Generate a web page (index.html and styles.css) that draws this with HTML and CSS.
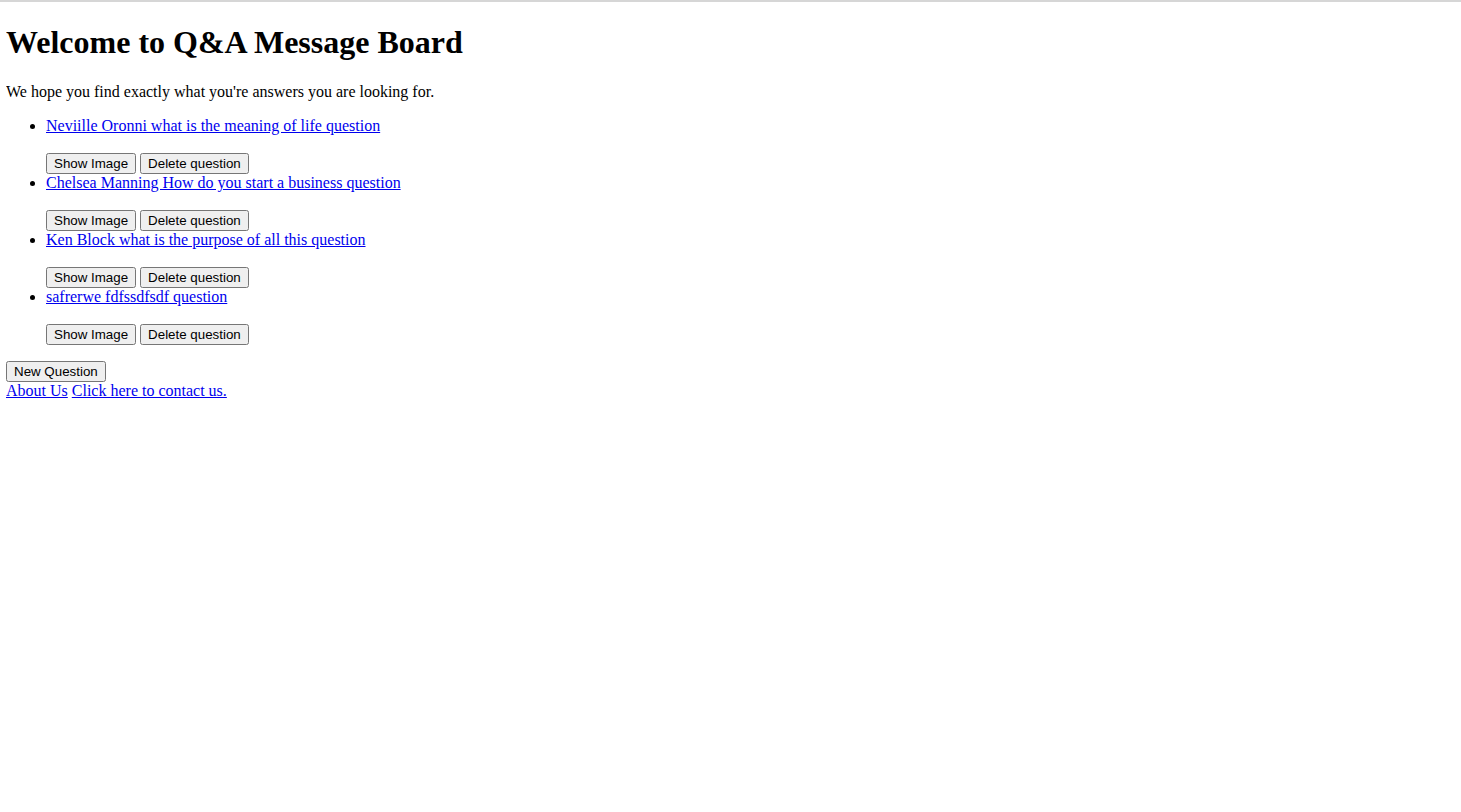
FILE: index.html
```html
<!DOCTYPE html>
<html>
<head>
<meta charset="utf-8">
<title>Q&amp;A Message Board</title>
<link rel="stylesheet" href="styles.css">
</head>
<body class="page">
<h1 class="title">Welcome to Q&amp;A Message Board</h1>
<p class="intro">We hope you find exactly what you're answers you are looking for.</p>
<ul class="questions">
  <li class="question"><a class="question-link" href="#">Neviille Oronni what is the meaning of life question</a><br><br><button class="btn">Show Image</button> <button class="btn">Delete question</button></li>
  <li class="question"><a class="question-link" href="#">Chelsea Manning How do you start a business question</a><br><br><button class="btn">Show Image</button> <button class="btn">Delete question</button></li>
  <li class="question"><a class="question-link" href="#">Ken Block what is the purpose of all this question</a><br><br><button class="btn">Show Image</button> <button class="btn">Delete question</button></li>
  <li class="question"><a class="question-link" href="#">safrerwe fdfssdfsdf question</a><br><br><button class="btn">Show Image</button> <button class="btn">Delete question</button></li>
</ul>
<button class="btn">New Question</button><br>
<a class="footer-link" href="#">About Us</a> <a class="footer-link" href="#">Click here to contact us.</a>
</body>
</html>
```
FILE: styles.css
```css
html {
  font-family: "Liberation Serif", "Times New Roman", serif;
  border-top: 2px solid #d6d6d6;
}
.page {
  margin: 0 6px 8px 6px;
}
.title {
  font-size: 2em;
  margin: calc(0.67em + 1px) 0 0.67em 0;
}
.questions a,
.footer-link {
  color: #0000ee;
}
.btn {
  font-family: "Liberation Sans", Arial, sans-serif;
}
```
